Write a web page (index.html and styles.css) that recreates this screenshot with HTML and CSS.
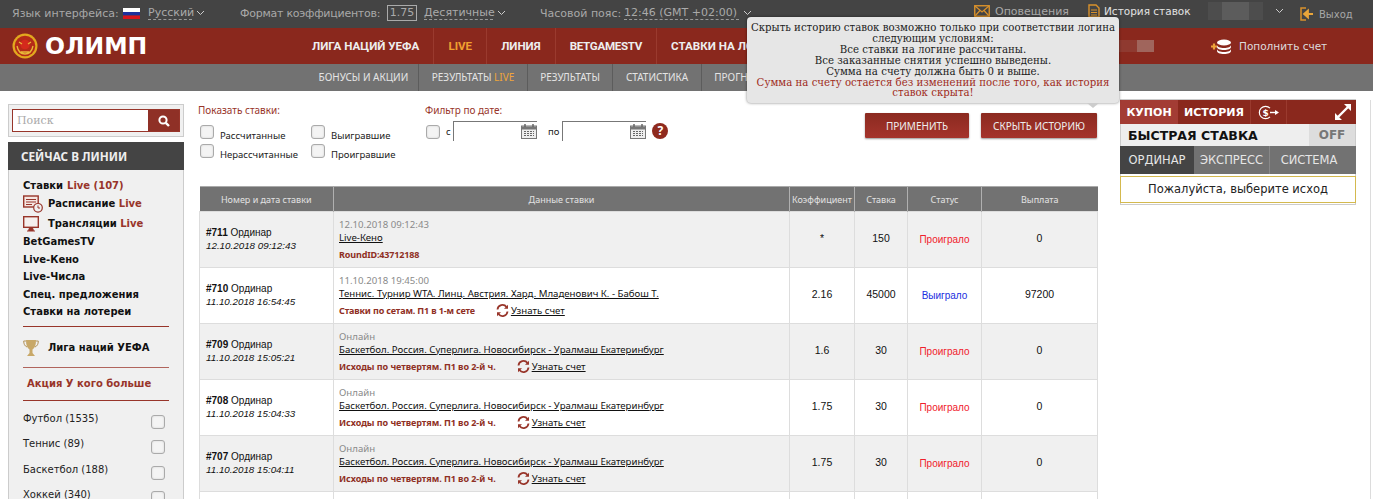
FILE: index.html
```html
<!DOCTYPE html>
<html lang="ru">
<head>
<meta charset="utf-8">
<title>Олимп — История ставок</title>
<link rel="stylesheet" href="styles.css">
</head>
<body>
<header class="topbar">
  <span class="tb-label tb-lang">Язык интерфейса:</span>
  <svg class="flag" width="17" height="11" viewBox="0 0 17 11"><rect width="17" height="4" fill="#fff"/><rect y="4" width="17" height="3.5" fill="#1c2f9c"/><rect y="7.5" width="17" height="3.5" fill="#d8141c"/></svg>
  <span class="tb-link tb-ru">Русский</span>
  <svg class="chev" width="7" height="4" viewBox="0 0 7 4"><path d="M0 0l3.5 3.5L7 0" fill="none" stroke="#ccc"/></svg>
  <span class="tb-label tb-fmt">Формат коэффициентов:</span>
  <span class="odds-box">1.75</span>
  <span class="tb-link tb-dec">Десятичные</span>
  <svg class="chev" width="7" height="4" viewBox="0 0 7 4"><path d="M0 0l3.5 3.5L7 0" fill="none" stroke="#ccc"/></svg>
  <span class="tb-label tb-tz">Часовой пояс:</span>
  <span class="tb-link tb-time">12:46 (GMT +02:00)</span>
  <svg class="chev" width="7" height="4" viewBox="0 0 7 4"><path d="M0 0l3.5 3.5L7 0" fill="none" stroke="#ccc"/></svg>
  <svg class="ic-mail" width="16" height="12" viewBox="0 0 16 12"><rect x=".75" y=".75" width="14.5" height="10.5" fill="none" stroke="#d9912b" stroke-width="1.4"/><path d="M1 1l7 6 7-6M1 11l5-5.500M15 11l-5-5.500" fill="none" stroke="#d9912b" stroke-width="1.200"/></svg>
  <span class="tb-label tb-notif">Оповещения</span>
  <svg class="ic-doc" width="12" height="14" viewBox="0 0 12 14"><path d="M1 1h7l3 3v9H1z" fill="none" stroke="#d9912b" stroke-width="1.400"/><path d="M3 6h6M3 8.500h6M3 11h6" stroke="#d9912b"/></svg>
  <span class="tb-history">История ставок</span>
  <span class="blur-name"><i></i><i></i><i></i></span>
  <svg class="chev chev-user" width="7" height="4" viewBox="0 0 7 4"><path d="M0 0l3.500 3.500L7 0" fill="none" stroke="#ccc"/></svg>
  <svg class="ic-exit" width="14" height="14" viewBox="0 0 14 14"><path d="M6 1H1v12h5" fill="none" stroke="#d9912b" stroke-width="1.500"/><path d="M13 7H7M8 3.500L4 7l4 3.500z" fill="#e9a53a" stroke="#e9a53a" stroke-width="1.800"/></svg>
  <span class="tb-label tb-exit">Выход</span>
</header>

<div class="mainbar">
  <a class="logo">
    <svg width="26" height="26" viewBox="0 0 26 26"><circle cx="13" cy="13" r="12.500" fill="#e2a81e"/><circle cx="13" cy="13" r="10.300" fill="#b52a18"/><circle cx="13" cy="11.500" r="4.800" fill="#d42a1c"/><path d="M5 13c1 5 4 8 8 8s7-3 8-8M7 9l3 2M19 9l-3 2M9 19h8" fill="none" stroke="#e8b838" stroke-width="1.300"/></svg>
    <span class="logo-text">ОЛИМП</span>
  </a>
  <nav class="nav">
    <a class="nav-item nav-first">ЛИГА НАЦИЙ УЕФА</a>
    <a class="nav-item nav-live">LIVE</a>
    <a class="nav-item">ЛИНИЯ</a>
    <a class="nav-item nav-bet">BETGAMESTV</a>
    <a class="nav-item">СТАВКИ НА ЛОТЕРЕИ</a>
  </nav>
  <span class="balance-blur"><i></i><i></i></span>
  <svg class="ic-coins" width="21" height="15" viewBox="0 0 21 15"><path d="M0 7.500h6M3 4.500v6" stroke="#eda33a" stroke-width="2.200"/><ellipse cx="13" cy="3.500" rx="7" ry="3" fill="#fff"/><path d="M6 6c0 1.700 3 3 7 3s7-1.300 7-3v2c0 1.700-3 3-7 3s-7-1.300-7-3zM6 10c0 1.700 3 3 7 3s7-1.300 7-3v2c0 1.700-3 3-7 3s-7-1.300-7-3z" fill="#fff"/></svg>
  <span class="topup">Пополнить счет</span>
</div>

<nav class="subbar">
  <a class="sub-item sub-first">БОНУСЫ И АКЦИИ</a>
  <a class="sub-item">РЕЗУЛЬТАТЫ <span class="sub-live">LIVE</span></a>
  <a class="sub-item">РЕЗУЛЬТАТЫ</a>
  <a class="sub-item">СТАТИСТИКА</a>
  <a class="sub-item sub-last">ПРОГНОЗЫ</a>
</nav>

<div class="content">
  <aside class="sidebar">
    <div class="search-frame">
      <div class="search">
        <span class="search-text">Поиск</span>
        <span class="search-btn"><svg width="12" height="12" viewBox="0 0 12 12"><circle cx="5" cy="5" r="3.600" fill="none" stroke="#fff" stroke-width="2"/><path d="M7.800 7.800L11 11" stroke="#fff" stroke-width="2.400"/></svg></span>
      </div>
    </div>
    <div class="panel">
      <h2 class="panel-title">СЕЙЧАС В ЛИНИИ</h2>
      <div class="panel-body">
        <a class="lnk lnk-a">Ставки <b class="red">Live (107)</b></a>
        <a class="lnk lnk-icon lnk-b">
          <svg width="20" height="18" viewBox="0 0 20 18"><rect x=".7" y="1" width="14.500" height="11" fill="#f5e6e2" stroke="#98352a" stroke-width="1.400"/><path d="M3 4.500h10M3 7h10M3 9.500h6" stroke="#98352a"/><circle cx="15" cy="12.800" r="4.300" fill="#f0f0f0" stroke="#98352a" stroke-width="1.200"/><path d="M15 10.500v2.500h2" fill="none" stroke="#98352a"/></svg>
          <span>Расписание <b class="red">Live</b></span>
        </a>
        <a class="lnk lnk-icon lnk-c">
          <svg width="16" height="16" viewBox="0 0 16 16"><rect x=".7" y=".7" width="14.600" height="10.600" fill="#f5f0ee" stroke="#98352a" stroke-width="1.400"/><path d="M6.500 12h3l1 2.500h-5zM4 15h8" fill="#98352a" stroke="#98352a"/></svg>
          <span>Трансляции <b class="red">Live</b></span>
        </a>
        <a class="lnk">BetGamesTV</a>
        <a class="lnk">Live-Кено</a>
        <a class="lnk">Live-Числа</a>
        <a class="lnk">Спец. предложения</a>
        <a class="lnk">Ставки на лотереи</a>
        <hr class="rule rule-1">
        <a class="lnk lnk-icon lnk-cup">
          <svg width="16" height="18" viewBox="0 0 16 18"><path d="M3 1h10c0 5-1 8-3.500 9.500V14l2.500 3H4l2.500-3v-3.500C4 9 3 6 3 1z" fill="#c8a868"/><path d="M3 2H.7c0 3 1 5 3.300 6M13 2h2.300c0 3-1 5-3.300 6" fill="none" stroke="#b3935a"/></svg>
          <span>Лига наций УЕФА</span>
        </a>
        <hr class="rule rule-2">
        <a class="lnk promo">Акция У кого больше</a>
        <hr class="rule rule-3">
        <label class="sport">Футбол (1535)<span class="check"></span></label>
        <label class="sport">Теннис (89)<span class="check"></span></label>
        <label class="sport">Баскетбол (188)<span class="check"></span></label>
        <label class="sport">Хоккей (340)<span class="check"></span></label>
      </div>
    </div>
  </aside>

  <main class="main">
    <section class="filters">
      <div class="f-show">
        <div class="f-title">Показать ставки:</div>
        <div class="f-grid">
          <label class="f-opt"><span class="check"></span>Рассчитанные</label>
          <label class="f-opt"><span class="check"></span>Выигравшие</label>
          <label class="f-opt"><span class="check"></span>Нерассчитанные</label>
          <label class="f-opt"><span class="check"></span>Проигравшие</label>
        </div>
      </div>
      <div class="f-date">
        <div class="f-title">Фильтр по дате:</div>
        <div class="f-date-row">
          <span class="check"></span><span class="f-s">с</span>
          <span class="date-input"><svg class="cal" width="16" height="15" viewBox="0 0 16 15"><rect x=".5" y="2" width="15" height="12.500" fill="#eee" stroke="#777"/><rect x="1" y="2.500" width="14" height="3" fill="#777"/><path d="M4 0v3M12 0v3" stroke="#666" stroke-width="1.500"/><path d="M3 7.500h10M3 9.500h10M3 11.500h10" stroke="#666" stroke-dasharray="2 1"/></svg></span>
          <span class="f-po">по</span>
          <span class="date-input"><svg class="cal" width="16" height="15" viewBox="0 0 16 15"><rect x=".5" y="2" width="15" height="12.500" fill="#eee" stroke="#777"/><rect x="1" y="2.500" width="14" height="3" fill="#777"/><path d="M4 0v3M12 0v3" stroke="#666" stroke-width="1.500"/><path d="M3 7.500h10M3 9.500h10M3 11.500h10" stroke="#666" stroke-dasharray="2 1"/></svg></span>
          <span class="help">?</span>
        </div>
      </div>
      <div class="f-actions">
        <button class="btn btn-apply">ПРИМЕНИТЬ</button>
        <button class="btn btn-hide">СКРЫТЬ ИСТОРИЮ</button>
      </div>
    </section>

    <table class="bets">
      <colgroup><col class="c1"><col class="c2"><col class="c3"><col class="c4"><col class="c5"><col class="c6"></colgroup>
      <thead>
        <tr><th>Номер и дата ставки</th><th>Данные ставки</th><th>Коэффициент</th><th>Ставка</th><th>Статус</th><th>Выплата</th></tr>
      </thead>
      <tbody>
        <tr class="odd">
          <td class="b-id"><b>#711</b> Ординар<br><em>12.10.2018 09:12:43</em></td>
          <td class="b-data"><div class="b-when">12.10.2018 09:12:43</div><a class="b-event">Live-Кено</a><div class="b-line"><b class="b-mkt">RoundID:43712188</b></div></td>
          <td class="num">*</td><td class="num">150</td><td class="lost">Проиграло</td><td class="num">0</td>
        </tr>
        <tr>
          <td class="b-id"><b>#710</b> Ординар<br><em>11.10.2018 16:54:45</em></td>
          <td class="b-data"><div class="b-when">11.10.2018 19:45:00</div><a class="b-event">Теннис. Турнир WTA. Линц. Австрия. Хард. Младенович К. - Бабош Т.</a><div class="b-line"><b class="b-mkt">Ставки по сетам. П1 в 1-м сете</b><svg class="refresh" width="13" height="13" viewBox="0 0 13 13"><path d="M1.500 5.500A5 5 0 0 1 10.500 3M11.500 7.500A5 5 0 0 1 2.500 10" fill="none" stroke="#98352a" stroke-width="1.800"/><path d="M12 .8v4H8zM1 12.200v-4h4z" fill="#98352a"/></svg><a class="b-score">Узнать счет</a></div></td>
          <td class="num">2.16</td><td class="num">45000</td><td class="won">Выиграло</td><td class="num">97200</td>
        </tr>
        <tr class="odd">
          <td class="b-id"><b>#709</b> Ординар<br><em>11.10.2018 15:05:21</em></td>
          <td class="b-data"><div class="b-when">Онлайн</div><a class="b-event">Баскетбол. Россия. Суперлига. Новосибирск - Уралмаш Екатеринбург</a><div class="b-line"><b class="b-mkt b-mkt-q">Исходы по четвертям. П1 во 2-й ч.</b><svg class="refresh" width="13" height="13" viewBox="0 0 13 13"><path d="M1.500 5.500A5 5 0 0 1 10.500 3M11.500 7.500A5 5 0 0 1 2.500 10" fill="none" stroke="#98352a" stroke-width="1.800"/><path d="M12 .8v4H8zM1 12.200v-4h4z" fill="#98352a"/></svg><a class="b-score">Узнать счет</a></div></td>
          <td class="num">1.6</td><td class="num">30</td><td class="lost">Проиграло</td><td class="num">0</td>
        </tr>
        <tr>
          <td class="b-id"><b>#708</b> Ординар<br><em>11.10.2018 15:04:33</em></td>
          <td class="b-data"><div class="b-when">Онлайн</div><a class="b-event">Баскетбол. Россия. Суперлига. Новосибирск - Уралмаш Екатеринбург</a><div class="b-line"><b class="b-mkt b-mkt-q">Исходы по четвертям. П1 во 2-й ч.</b><svg class="refresh" width="13" height="13" viewBox="0 0 13 13"><path d="M1.500 5.500A5 5 0 0 1 10.500 3M11.500 7.500A5 5 0 0 1 2.500 10" fill="none" stroke="#98352a" stroke-width="1.800"/><path d="M12 .8v4H8zM1 12.200v-4h4z" fill="#98352a"/></svg><a class="b-score">Узнать счет</a></div></td>
          <td class="num">1.75</td><td class="num">30</td><td class="lost">Проиграло</td><td class="num">0</td>
        </tr>
        <tr class="odd">
          <td class="b-id"><b>#707</b> Ординар<br><em>11.10.2018 15:04:11</em></td>
          <td class="b-data"><div class="b-when">Онлайн</div><a class="b-event">Баскетбол. Россия. Суперлига. Новосибирск - Уралмаш Екатеринбург</a><div class="b-line"><b class="b-mkt b-mkt-q">Исходы по четвертям. П1 во 2-й ч.</b><svg class="refresh" width="13" height="13" viewBox="0 0 13 13"><path d="M1.500 5.500A5 5 0 0 1 10.500 3M11.500 7.500A5 5 0 0 1 2.500 10" fill="none" stroke="#98352a" stroke-width="1.800"/><path d="M12 .8v4H8zM1 12.200v-4h4z" fill="#98352a"/></svg><a class="b-score">Узнать счет</a></div></td>
          <td class="num">1.75</td><td class="num">30</td><td class="lost">Проиграло</td><td class="num">0</td>
        </tr>
        <tr class="blank"><td></td><td></td><td></td><td></td><td></td><td></td></tr>
      </tbody>
    </table>
  </main>

  <aside class="coupon">
    <div class="c-head">
      <a class="c-tab c-active">КУПОН</a>
      <a class="c-tab c-hist">ИСТОРИЯ</a>
      <a class="c-tab c-cash"><svg width="21" height="15" viewBox="0 0 21 15"><path d="M12 3.200A6.200 6.200 0 1 0 12 11.800" fill="none" stroke="#fff" stroke-width="1.200"/><text x="4.500" y="11" class="c-dollar">$</text><path d="M12 7.500h5" stroke="#fff" stroke-width="1.400"/><path d="M17 5l4 2.500L17 10z" fill="#fff"/></svg></a>
      <a class="c-expand"><svg width="16" height="16" viewBox="0 0 16 16"><path d="M3 13L13 3" stroke="#fff" stroke-width="2.400"/><path d="M9 0h7v7zM0 9v7h7z" fill="#fff"/></svg></a>
    </div>
    <div class="c-quick"><span class="c-quick-t">БЫСТРАЯ СТАВКА</span><span class="c-off">OFF</span></div>
    <div class="c-types">
      <a class="c-type c-sel">ОРДИНАР</a>
      <a class="c-type">ЭКСПРЕСС</a>
      <a class="c-type c-sys">СИСТЕМА</a>
    </div>
    <div class="c-msg">Пожалуйста, выберите исход</div>
  </aside>
  <div class="rail"></div>
</div>

<div class="tip">
  Скрыть историю ставок возможно только при соответствии логина следующим условиям:<br>
  Все ставки на логине рассчитаны.<br>
  Все заказанные снятия успешно выведены.<br>
  Сумма на счету должна быть 0 и выше.<br>
  <span class="tip-warn">Сумма на счету остается без изменений после того, как история ставок скрыта!</span>
</div>
</body>
</html>
```
FILE: styles.css
```css
* { box-sizing: border-box; }
html, body { margin: 0; padding: 0; height: 499px; overflow: hidden; background: #fff; }
body { font-family: "DejaVu Sans", sans-serif; font-size: 10px; color: #111; position: relative; }
a { color: inherit; text-decoration: none; display: inline-block; }

/* top bar */
.topbar { height: 28px; background: #444; display: flex; align-items: center; font-size: 11px; color: #aaa; padding-bottom: 2px; white-space: nowrap; }
.tb-label { color: #a8a8a8; }
.tb-link { color: #aaa; border-bottom: 1px dashed #999; line-height: 13px; }
.tb-lang { margin-left: 12px; width: 111px; }
.flag { margin-right: 8px; }
.tb-ru { width: 44px; }
.chev { margin-left: 5px; flex: none; }
.tb-fmt { margin-left: 36px; width: 147px; letter-spacing: -.25px; }
.odds-box { width: 30px; height: 16px; border: 1px solid #aaa; text-align: center; line-height: 14px; margin-right: 7px; }
.tb-dec { width: 69px; }
.tb-tz { margin-left: 35px; width: 84px; }
.tb-time { width: 115px; }
.ic-mail { margin-left: 223px; margin-top: -4px; }
.tb-notif { margin-left: 5px; width: 93px; margin-top: -4px; }
.ic-doc { margin-top: -4px; }
.tb-history { margin-left: 4px; width: 104px; color: #e2e2e2; margin-top: -4px; font-size: 10.500px; }
.blur-name { display: flex; width: 55px; height: 18px; margin-top: -4px; }
.blur-name i { flex: 1; background: #4d4d4d; }
.blur-name i:nth-child(2) { background: #5c5c5c; flex: 2; }
.chev-user { margin-left: 13px; margin-top: -4px; }
.ic-exit { margin-left: 17px; margin-top: 2px; }
.tb-exit { margin-left: 5px; margin-top: 2px; font-size: 10px; }

/* red bar */
.mainbar { height: 36px; background: #8a281d; display: flex; align-items: center; color: #fff; white-space: nowrap; padding-right: 47px; }
.logo { display: flex; align-items: center; margin-left: 12px; width: 286px; flex: none; }
.logo-text { font-family: "DejaVu Sans", sans-serif; font-weight: 700; font-size: 23.500px; margin-left: 7px; line-height: 26px; }
.nav { display: flex; height: 36px; }
.nav-item { font-family: Roboto, sans-serif; font-weight: 700; font-size: 11.600px; line-height: 36px; padding: 0 14px; border-left: 1px solid #9a3a2e; color: #eee; }
.nav-first { border-left: 0; }
.nav-live { color: #f0a030; }
.nav-bet { letter-spacing: -.3px; }
.balance-blur { display: flex; width: 35px; height: 12px; margin-left: auto; margin-right: 57px; }
.balance-blur i { flex: 1; background: #a0655c; }
.balance-blur i:first-child { background: #8f3a30; }
.ic-coins { flex: none; }
.topup { margin-left: 7px; font-size: 10.500px; color: #ddd; width: 87px; }

/* sub bar */
.subbar { height: 27px; background: #727272; display: flex; padding-left: 306px; white-space: nowrap; }
.sub-item { font-family: "Noto Sans", sans-serif; font-size: 10px; line-height: 27px; color: #e4e4e4; padding: 0 12.500px; border-right: 1px solid #5c5c5c; }
.sub-first { padding-right: 10px; }
.sub-last { border-right: 0; }
.sub-live { color: #eea53a; }

/* layout */
.content { display: flex; align-items: flex-start; padding-top: 13px; height: 408px; overflow: hidden; }

/* sidebar */
.sidebar { width: 176px; margin-left: 8px; flex: none; }
.search-frame { height: 33px; border: 1px solid #ccc; background: #f0f0f0; padding: 4px 3px; }
.search { display: flex; height: 23px; border: 1px solid #98352a; background: #fff; }
.search-text { flex: 1; font-family: "DejaVu Serif", serif; font-size: 11px; color: #aaa; line-height: 21px; padding-left: 4px; }
.search-btn { width: 31px; background: #8f3026; display: flex; align-items: center; justify-content: center; }
.panel { margin-top: 5px; border: 1px solid #ccc; border-top: 0; background: #f0f0f0; height: 400px; }
.panel-title { margin: 0 -1px; height: 28px; background: #444; color: #eee; font-family: "Noto Sans", sans-serif; font-weight: 700; font-size: 11.700px; line-height: 28px; padding-left: 13px; }
.panel-body { padding: 7px 14px 0 14px; }
.lnk { display: flex; align-items: center; font-weight: 700; font-size: 10px; line-height: 12px; height: 17.500px; color: #111; white-space: nowrap; }
.red { color: #98352a; font-weight: 700; }
.lnk-a .red { margin-left: 4px; }
.lnk-icon span { margin-left: 5px; }
.lnk-b { height: 19px; }
.lnk-c { height: 20px; }
.lnk-c span { margin-left: 9px; }
.rule { border: 0; border-top: 1px solid #98352a; margin: 0; }
.rule-1 { margin-top: 5px; }
.lnk-cup { margin-top: 12px; height: 18px; }
.lnk-cup span { margin-left: 9px; }
.rule-2 { margin-top: 10px; border-top-color: #b0645c; }
.promo { color: #98352a; margin: 8px 0 0 4px; height: 16px; }
.rule-3 { margin-top: 8px; }
.sport { display: flex; justify-content: space-between; font-size: 10px; height: 25.300px; color: #222; line-height: 12px; margin-right: 4px; }
.rule-3 + .sport { margin-top: 12px; }
.sport .check { margin-top: 2px; }
.check { width: 14px; height: 14px; border: 1px solid #aaa; border-radius: 3px; background: #f4f4f4; box-shadow: inset 0 0 2px #ccc; display: block; flex: none; }

/* main */
.main { width: 898px; margin-left: 15px; flex: none; }
.filters { height: 82px; display: flex; position: relative; }
.f-title { color: #98352a; font-family: "Noto Sans", sans-serif; font-size: 10px; line-height: 13px; }
.f-show { width: 226px; margin-left: -1px; }
.f-grid { display: grid; grid-template-columns: 111px 100px; margin-top: 8px; margin-left: 2px; row-gap: 5px; }
.f-opt { display: flex; align-items: flex-start; font-family: "Noto Sans", sans-serif; font-size: 9.500px; line-height: 21px; color: #222; white-space: nowrap; height: 14px; }
.f-opt .check { margin-right: 6px; }
.f-date { width: 250px; padding-left: 1px; }
.f-date-row { display: flex; align-items: center; margin-top: 4px; font-family: "Noto Sans", sans-serif; font-size: 9.500px; color: #222; margin-left: 1px; }
.f-date-row .check { margin-top: 2px; }
.f-s { margin-left: 6px; width: 7px; }
.f-po { margin: 0 3px 0 11px; }
.date-input { width: 84px; height: 20px; border-top: 1px solid #777; border-left: 1px solid #777; position: relative; display: block; }
.cal { position: absolute; right: 0; top: 2px; }
.help { margin-left: 6px; width: 16px; height: 16px; border-radius: 50%; background: #8f2a1e; color: #fff; font-weight: 700; font-size: 12px; line-height: 16px; text-align: center; }
.f-actions { display: flex; gap: 12px; margin-left: auto; padding-top: 9px; }
.btn { height: 25px; border: 0; padding: 0; color: #eee; font-family: "Noto Sans", sans-serif; font-size: 10px; background: linear-gradient(#8b2a20, #a5342c); box-shadow: 0 1px 2px #999; border-radius: 1px; }
.btn-apply { width: 104px; }
.btn-hide { width: 116px; }

.bets { width: 898px; border-collapse: collapse; table-layout: fixed; font-family: "Liberation Sans", sans-serif; font-size: 10.500px; }
.c1 { width: 134px; } .c2 { width: 456px; } .c3 { width: 65px; } .c4 { width: 53px; } .c5 { width: 74px; } .c6 { width: 116px; }
.bets th { height: 25px; background: #727272; color: #e2e2e2; font-family: "Noto Sans", sans-serif; font-weight: 400; font-size: 9px; border-left: 1px solid #b0b0b0; border-top: 1px solid #aaa; padding: 0; white-space: nowrap; }
.bets th:first-child { border-left: 0; }
.bets td { height: 56px; padding: 0; text-align: center; border: 1px solid #ddd; }
.odd td { background: #f0f0f0; }
.bets .b-id { text-align: left; padding: 0 0 2px 6px; line-height: 13px; font-size: 10px; }
.b-id em { font-size: 9.800px; }
.bets .b-data { text-align: left; padding: 0 0 0 5px; font-family: "Noto Sans", sans-serif; font-size: 9.650px; line-height: 13px; }
.b-when { color: #8a8a8a; margin-top: -1px; }
.b-event { text-decoration: underline; color: #111; display: block; line-height: 14px; white-space: nowrap; }
.b-line { display: flex; align-items: center; margin-top: 3px; height: 13px; white-space: nowrap; }
.b-mkt { color: #8f2f24; font-size: 9px; font-weight: 700; letter-spacing: -.15px; }
.b-mkt-q { letter-spacing: -.05px; }
.refresh { margin-left: 21px; margin-right: 2px; flex: none; }
.b-score { text-decoration: underline; color: #111; }
.bets .num { color: #111; padding-bottom: 3px; }
.lost { color: #f0202c; font-size: 10px; }
.won { color: #1c2fe0; font-size: 10px; }
.blank td { height: 20px; }

/* coupon */
.coupon { width: 236px; margin-left: 23px; margin-top: -4px; height: 105px; flex: none; border: 1px solid #ccc; border-width: 0 1px 1px; box-shadow: 0 -1px 0 #ccc; }
.c-head { display: flex; height: 24px; background: #8a281d; color: #fff; font-weight: 700; font-size: 11px; line-height: 25px; margin: 0 -1px; }
.c-tab { padding: 0; text-align: center; border-right: 1px solid #9a3a2e; }
.c-active { width: 58px; background: #a33c34; border-right: 0; }
.c-hist { width: 73px; }
.c-cash { width: 36px; display: flex; align-items: center; justify-content: center; }
.c-dollar { fill: #fff; font-size: 9px; font-weight: 700; }
.c-expand { margin-left: auto; width: 26px; display: flex; align-items: center; justify-content: center; }
.c-quick { display: flex; height: 22px; background: #eee; }
.c-quick-t { flex: 1; font-weight: 700; font-size: 12.500px; line-height: 24px; padding-left: 7px; color: #111; }
.c-off { width: 46px; background: #ddd; color: #777; font-weight: 700; font-size: 12px; line-height: 22px; text-align: center; }
.c-types { display: flex; height: 28px; background: #727272; margin: 0 -1px; }
.c-type { flex: 1; color: #e6e6e6; font-size: 11.500px; line-height: 28px; text-align: center; background: #727272; border-right: 1px solid #888; }
.c-sel { background: #444; flex: none; width: 74px; border-right: 0; }
.c-sys { flex: none; width: 86px; border-right: 0; padding-right: 8px; }
.c-msg { height: 27px; border: 1px solid #d4b94e; margin: 2px -1px 0; font-size: 11.500px; line-height: 25px; text-align: center; background: #fff; color: #222; }

.rail { width: 1px; height: 408px; background: #dcdcdc; margin-left: 14px; margin-top: -4px; flex: none; }

/* tooltip */
.tip { position: absolute; left: 747px; top: 17px; width: 372px; height: 86px; background: #e6e6e6; border-radius: 4px; box-shadow: 0 0 3px rgba(0,0,0,.5); font-family: "DejaVu Serif", serif; font-size: 10.200px; line-height: 10.900px; text-align: center; padding: 6px 3px 0; color: #1c1c1c; }
.tip::after { content: ""; position: absolute; right: 20px; bottom: -5px; border: 6px solid transparent; border-bottom: 0; border-top: 5px solid #ccc; }
.tip-warn { color: #a02c22; }
```
